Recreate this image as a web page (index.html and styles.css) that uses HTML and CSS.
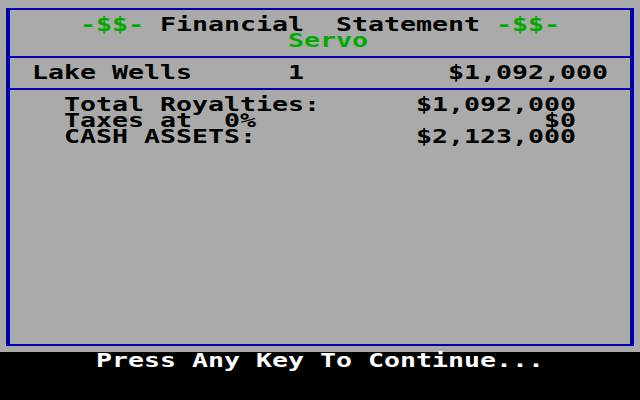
FILE: index.html
```html
<!DOCTYPE html>
<html>
<head>
<meta charset="utf-8">
<link rel="stylesheet" href="styles.css">
</head>
<body>
<div class="screen">
  <div class="panel">
    <div class="section head">
      <div class="row">     <span class="g">-$$-</span> Financial  Statement <span class="g">-$$-</span></div>
      <div class="row">                  <span class="g">Servo</span></div>
    </div>
    <div class="section item">
      <div class="row">  Lake Wells      1         $1,092,000</div>
    </div>
    <div class="section totals">
      <div class="row">    Total Royalties:      $1,092,000</div>
      <div class="row">    Taxes at  0%                  $0</div>
      <div class="row">    CASH ASSETS:          $2,123,000</div>
    </div>
  </div>
  <div class="footer">
    <div class="row w">      Press Any Key To Continue...</div>
  </div>
</div>
</body>
</html>
```
FILE: styles.css
```css
html, body {
  margin: 0;
  padding: 0;
  background: #000;
}
.screen {
  width: 640px;
  height: 400px;
  background: #aaaaaa;
  display: flex;
  flex-direction: column;
  overflow: hidden;
  font-family: "DejaVu Sans Mono", "Liberation Mono", monospace;
  font-weight: bold;
  font-size: 20px;
  color: #000;
}
.panel {
  box-sizing: border-box;
  margin: 8px 6px 0 6px;
  height: 338px;
  border-style: solid;
  border-color: #0000aa;
  border-width: 2px 4px;
  display: flex;
  flex-direction: column;
}
.section {
  box-sizing: border-box;
  padding-top: 6px;
}
.head {
  height: 48px;
  border-bottom: 2px solid #0000aa;
}
.item {
  height: 32px;
  border-bottom: 2px solid #0000aa;
}
.panel .row {
  margin-left: -10px;
}
.row {
  height: 16px;
  line-height: 16px;
  white-space: pre;
  transform: scaleX(1.329);
  transform-origin: 0 0;
}
.g {
  color: #00aa00;
}
.footer {
  margin-top: 6px;
  flex: 1;
  background: #000;
}
.w {
  color: #fff;
}
```
